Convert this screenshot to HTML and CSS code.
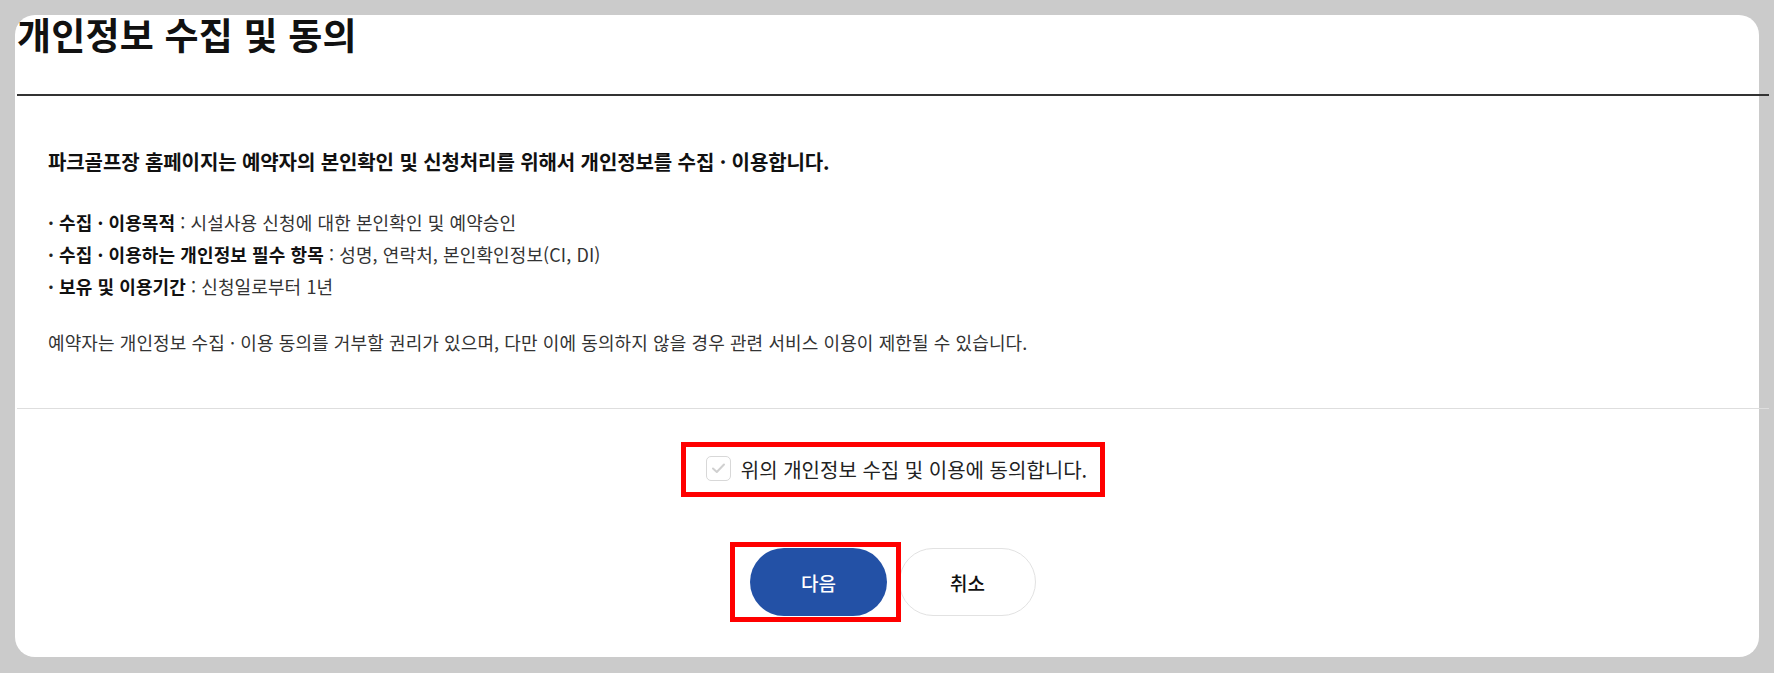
FILE: index.html
```html
<!DOCTYPE html>
<html lang="ko">
<head>
<meta charset="utf-8">
<title>개인정보 수집 및 동의</title>
<link rel="stylesheet" href="styles.css">
</head>
<body>
<div class="modal">
  <div class="inner">
    <div class="head">
      <h1 class="title">개인정보 수집 및 동의</h1>
    </div>
    <div class="content">
      <p class="lead">파크골프장 홈페이지는 예약자의 본인확인 및 신청처리를 위해서 개인정보를 수집 · 이용합니다.</p>
      <ul class="items">
        <li><b>수집 · 이용목적</b> : 시설사용 신청에 대한 본인확인 및 예약승인</li>
        <li><b>수집 · 이용하는 개인정보 필수 항목</b> : 성명, 연락처, 본인확인정보(CI, DI)</li>
        <li><b>보유 및 이용기간</b> : 신청일로부터 1년</li>
      </ul>
      <p class="note">예약자는 개인정보 수집 · 이용 동의를 거부할 권리가 있으며, 다만 이에 동의하지 않을 경우 관련 서비스 이용이 제한될 수 있습니다.</p>
    </div>
    <div class="agree-row">
      <label class="agree">
        <span class="check">
          <svg width="15" height="12" viewBox="0 0 15 12"><polyline points="2,6.5 5.8,10 13,2.5" fill="none" stroke="#d0d0d0" stroke-width="2" stroke-linecap="round" stroke-linejoin="round"/></svg>
        </span>
        <span class="agree-text">위의 개인정보 수집 및 이용에 동의합니다.</span>
      </label>
    </div>
    <div class="buttons">
      <span class="btn-wrap">
        <button class="btn btn-primary" type="button">다음</button>
        <span class="mark"></span>
      </span>
      <button class="btn btn-cancel" type="button">취소</button>
    </div>
  </div>
</div>
</body>
</html>
```
FILE: styles.css
```css
html, body {
  margin: 0;
  padding: 0;
}
body {
  background: #cbcbcb;
  font-family: "Noto Sans CJK KR", "Noto Sans", sans-serif;
  color: #222;
  height: 673px;
  overflow: hidden;
}
.modal {
  margin: 15px 0 0 15px;
  width: 1744px;
  background: #fff;
  border-radius: 20px;
  padding-bottom: 41px;
}
.inner {
  margin-left: 2px;
  width: 1752px;
}
.head {
  padding-bottom: 41px;
  border-bottom: 2px solid #333;
}
.title {
  margin: 0;
  font-size: 37px;
  line-height: 38px;
  font-weight: 700;
  letter-spacing: 0.2px;
  color: #111;
}
.content {
  padding: 52px 0 52px 31px;
  border-bottom: 1px solid #dedede;
}
.lead {
  margin: 0;
  font-size: 20px;
  line-height: 28px;
  font-weight: 700;
  letter-spacing: -0.1px;
  color: #111;
}
.items {
  list-style: none;
  margin: 30px 0 0;
  padding: 0;
  font-size: 18px;
  line-height: 32px;
  letter-spacing: 0.1px;
  color: #333;
}
.items li::before {
  content: "·";
  font-weight: 700;
  color: #222;
  margin-right: 5px;
}
.items b {
  color: #111;
  font-weight: 700;
}
.note {
  margin: 26px 0 0;
  font-size: 18px;
  line-height: 28px;
  letter-spacing: 0.1px;
  color: #333;
}
.agree-row {
  display: flex;
  justify-content: center;
  padding-top: 33px;
}
.agree {
  display: inline-flex;
  align-items: center;
  gap: 10px;
  height: 45px;
  padding: 0 13px 0 20px;
  border: 5px solid #ff0000;
  font-size: 20px;
  color: #222;
  cursor: pointer;
}
.check {
  width: 23px;
  height: 23px;
  border: 1px solid #d8d8d8;
  border-radius: 5px;
  background: #fff;
  display: flex;
  align-items: center;
  justify-content: center;
  margin-top: -3px;
}
.agree-text {
  line-height: 28px;
}
.buttons {
  display: flex;
  justify-content: center;
  gap: 12px;
  margin-top: 51px;
}
.btn-wrap {
  position: relative;
  display: inline-flex;
}
.btn {
  width: 137px;
  height: 68px;
  border-radius: 34px;
  font-family: "Noto Sans CJK KR", "Noto Sans", sans-serif;
  font-size: 19px;
  font-weight: 500;
  padding: 0;
  cursor: pointer;
}
.btn-primary {
  background: #2351a6;
  color: #fff;
  border: none;
}
.btn-cancel {
  background: #fff;
  color: #111;
  border: 1px solid #e2e2e2;
}
.mark {
  position: absolute;
  left: -20px;
  top: -6px;
  width: 161px;
  height: 70px;
  border: 5px solid #ff0000;
  pointer-events: none;
}
```
